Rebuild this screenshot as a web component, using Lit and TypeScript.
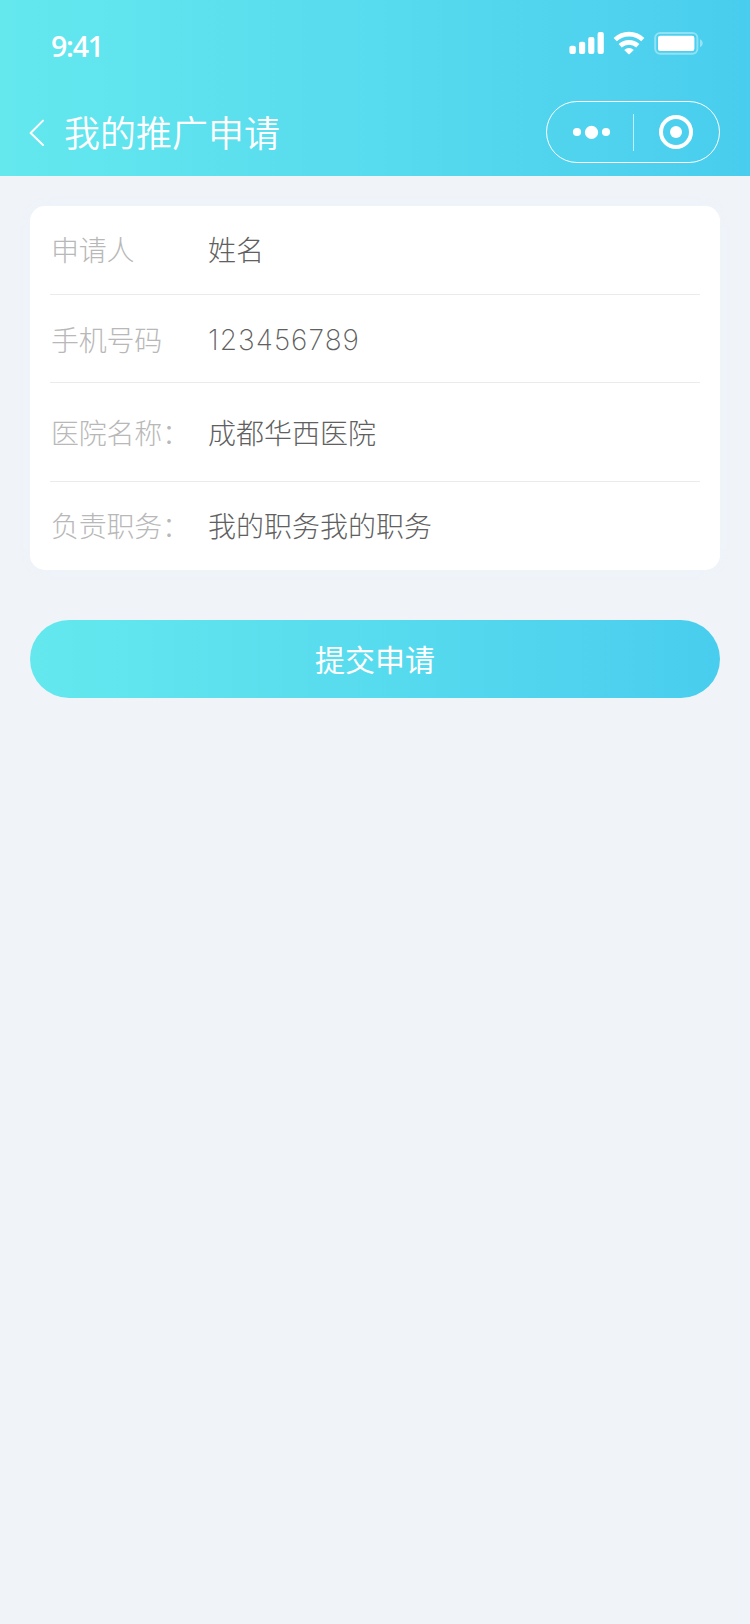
import { LitElement, html, css } from "lit";
import { customElement, property } from "lit/decorators.js";

@customElement("status-bar")
class StatusBar extends LitElement {
  static styles = css`
    :host { display: flex; justify-content: space-between; height: 92px; padding: 0 46px 0 51px; color: #fff; }
    .time { font: 600 28.5px/38px "Open Sans", "Noto Sans", sans-serif; letter-spacing: -1.2px; padding-top: 27px; }
    .icons { display: block; margin-top: 25px; }
  `;
  render() {
    return html`
      <span class="time">9:41</span>
      <svg class="icons" width="140" height="40" viewBox="0 0 140 40" fill="#fff">
        <rect x="5.4" y="20.8" width="6.4" height="8.2" rx="2" />
        <rect x="15" y="16.8" width="6.2" height="12.2" rx="2" />
        <rect x="24.2" y="12" width="6.2" height="17" rx="2" />
        <rect x="33.6" y="7" width="6.2" height="22" rx="2" />
        <g fill="none" stroke="#fff" stroke-width="4.6">
          <path d="M51.2 14.6a20.2 20.2 0 0 1 27.6 0" />
          <path d="M56.2 20.8a13 13 0 0 1 17.6 0" />
        </g>
        <path d="M60.2 25a7 7 0 0 1 9.6 0L65.7 29a1 1 0 0 1-1.4 0z" />
        <rect x="91.2" y="8" width="42.2" height="20.8" rx="5" fill="none" stroke="#fff" stroke-opacity=".38" stroke-width="2" />
        <rect x="94" y="10.8" width="36.4" height="15.2" rx="2.2" />
        <path d="M136 14.2c3.6 1.4 3.6 6.6 0 8z" fill-opacity=".42" />
      </svg>
    `;
  }
}

@customElement("nav-bar")
class NavBar extends LitElement {
  @property() heading = "";
  static styles = css`
    :host { display: flex; align-items: center; height: 80px; padding: 0 30px 0 28px; color: #fff; }
    .back { display: block; margin-right: 16px; }
    .title { flex: 1; margin: 0; padding-bottom: 2px; font: 350 36px/50px "Noto Sans CJK SC", sans-serif; }
    .capsule { display: block; }
  `;
  render() {
    return html`
      <svg class="back" width="20" height="30" viewBox="0 0 20 30" fill="none" stroke="#fff" stroke-width="2" stroke-linecap="round" stroke-linejoin="round">
        <path d="M15 3.6 2.6 16 15 28" />
      </svg>
      <h1 class="title">${this.heading}</h1>
      <svg class="capsule" width="174" height="62" viewBox="0 0 174 62" fill="#fff">
        <rect x=".5" y=".5" width="173" height="61" rx="30.5" fill="none" stroke="#fff" />
        <circle cx="31" cy="31" r="4.1" />
        <circle cx="45.5" cy="31.4" r="6.6" />
        <circle cx="60" cy="31" r="4.1" />
        <rect x="87" y="13" width="1" height="37" fill-opacity=".65" />
        <circle cx="130" cy="31" r="15" fill="none" stroke="#fff" stroke-width="4" />
        <circle cx="130" cy="31" r="6" />
      </svg>
    `;
  }
}

@customElement("app-root")
class AppRoot extends LitElement {
  static styles = css`
    :host { display: block; min-height: 1624px; background: #f0f4f9; font-family: "Noto Sans CJK SC", sans-serif;
      --brand: linear-gradient(90deg, #64e8ee 0%, #58dcee 46%, #49cdee 100%); }
    .header { height: 176px; background: var(--brand); }
    .content { padding: 30px 30px 0; }
    .card { box-sizing: border-box; height: 364px; padding: 0 20px; border-radius: 15px; background: #fff;
      display: grid; grid-template-rows: 89px 88px 99px 88px; box-shadow: 0 0 12px rgba(236, 244, 251, 0.6); }
    .row { display: grid; grid-template-columns: 157px 1fr; align-items: center; padding: 0 0 1px 1px;
      font-size: 28px; line-height: 40px; font-weight: 300; border-bottom: 1px solid #ebebeb; }
    .row:first-child { padding-bottom: 3px; }
    .row:nth-child(2) { padding-top: 1px; padding-bottom: 0; }
    .row:last-child { border-bottom: 0; padding-bottom: 2px; }
    .label { color: #b8b8b8; letter-spacing: -0.25px; }
    .value { color: #606060; }
    .digits { font-family: Inter, sans-serif; font-weight: 250; letter-spacing: 1.05px; padding-top: 1px; }
    .submit { display: block; width: 100%; height: 78px; margin-top: 50px; padding: 0 0 2px; border: 0; border-radius: 39px;
      background: var(--brand); color: #fff; font: 400 30px/42px "Noto Sans CJK SC", sans-serif; }
  `;
  rows = [
    { label: "申请人", value: "姓名" },
    { label: "手机号码", value: "123456789", digits: true },
    { label: "医院名称：", value: "成都华西医院" },
    { label: "负责职务：", value: "我的职务我的职务" },
  ];
  render() {
    return html`
      <header class="header">
        <status-bar></status-bar>
        <nav-bar heading="我的推广申请"></nav-bar>
      </header>
      <main class="content">
        <section class="card">
          ${this.rows.map((r) => html`
            <div class="row">
              <span class="label">${r.label}</span>
              <span class="value ${r.digits ? "digits" : ""}">${r.value}</span>
            </div>`)}
        </section>
        <button class="submit">提交申请</button>
      </main>
    `;
  }
}
